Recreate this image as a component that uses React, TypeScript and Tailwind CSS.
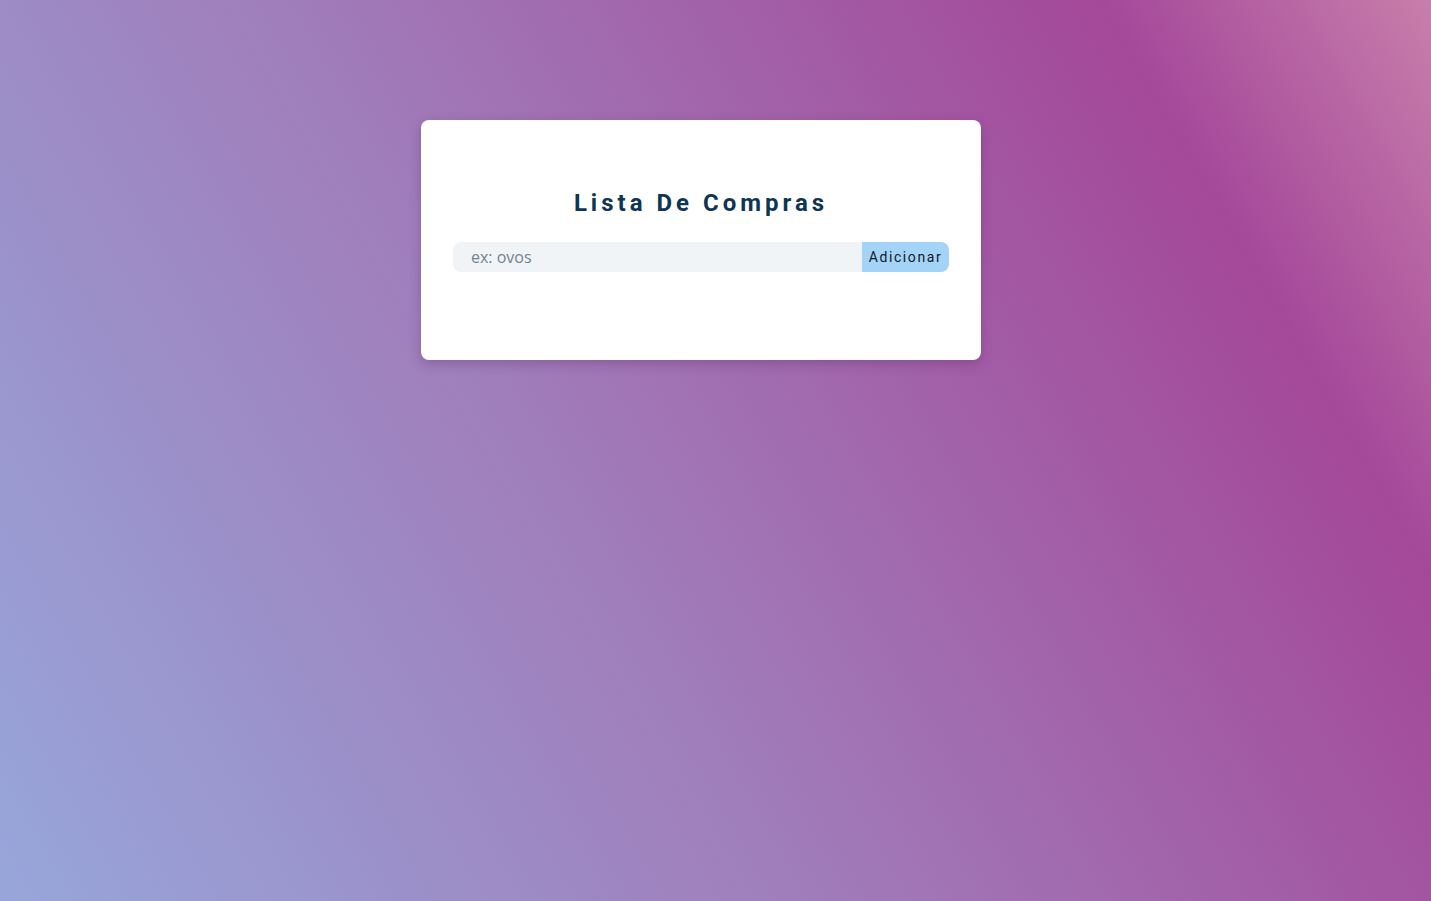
const App = () => {
  return (
    <main className="min-h-screen w-full bg-[linear-gradient(60deg,#97a6da_0%,#a07cba_42%,#a4489a_83%,#c87eab_100%)] pt-[120px] pr-[29px]">
      <section className="mx-auto w-[560px] h-[240px] rounded-lg bg-white px-8 pt-[67px] shadow-[0_4px_12px_rgba(60,20,80,0.25)]">
        <h1 className="text-center font-['Roboto',sans-serif] text-[24px] leading-8 font-bold tracking-[4px] text-[#0e3553]">
          Lista De Compras
        </h1>
        <div className="mt-[23px] flex h-[30px] w-full">
          <input
            type="text"
            placeholder="ex: ovos"
            className="h-full flex-1 rounded-l-lg bg-[#f0f4f7] pl-[18px] font-['Open_Sans',sans-serif] text-[16px] text-[#334] outline-none placeholder:text-[#6f8393]"
          />
          <button className="h-full w-[87px] rounded-r-lg bg-[#a3d4f7] font-['Roboto',sans-serif] text-[14px] tracking-[1.6px] text-[#111827]">
            Adicionar
          </button>
        </div>
      </section>
    </main>
  );
};

export default App;
